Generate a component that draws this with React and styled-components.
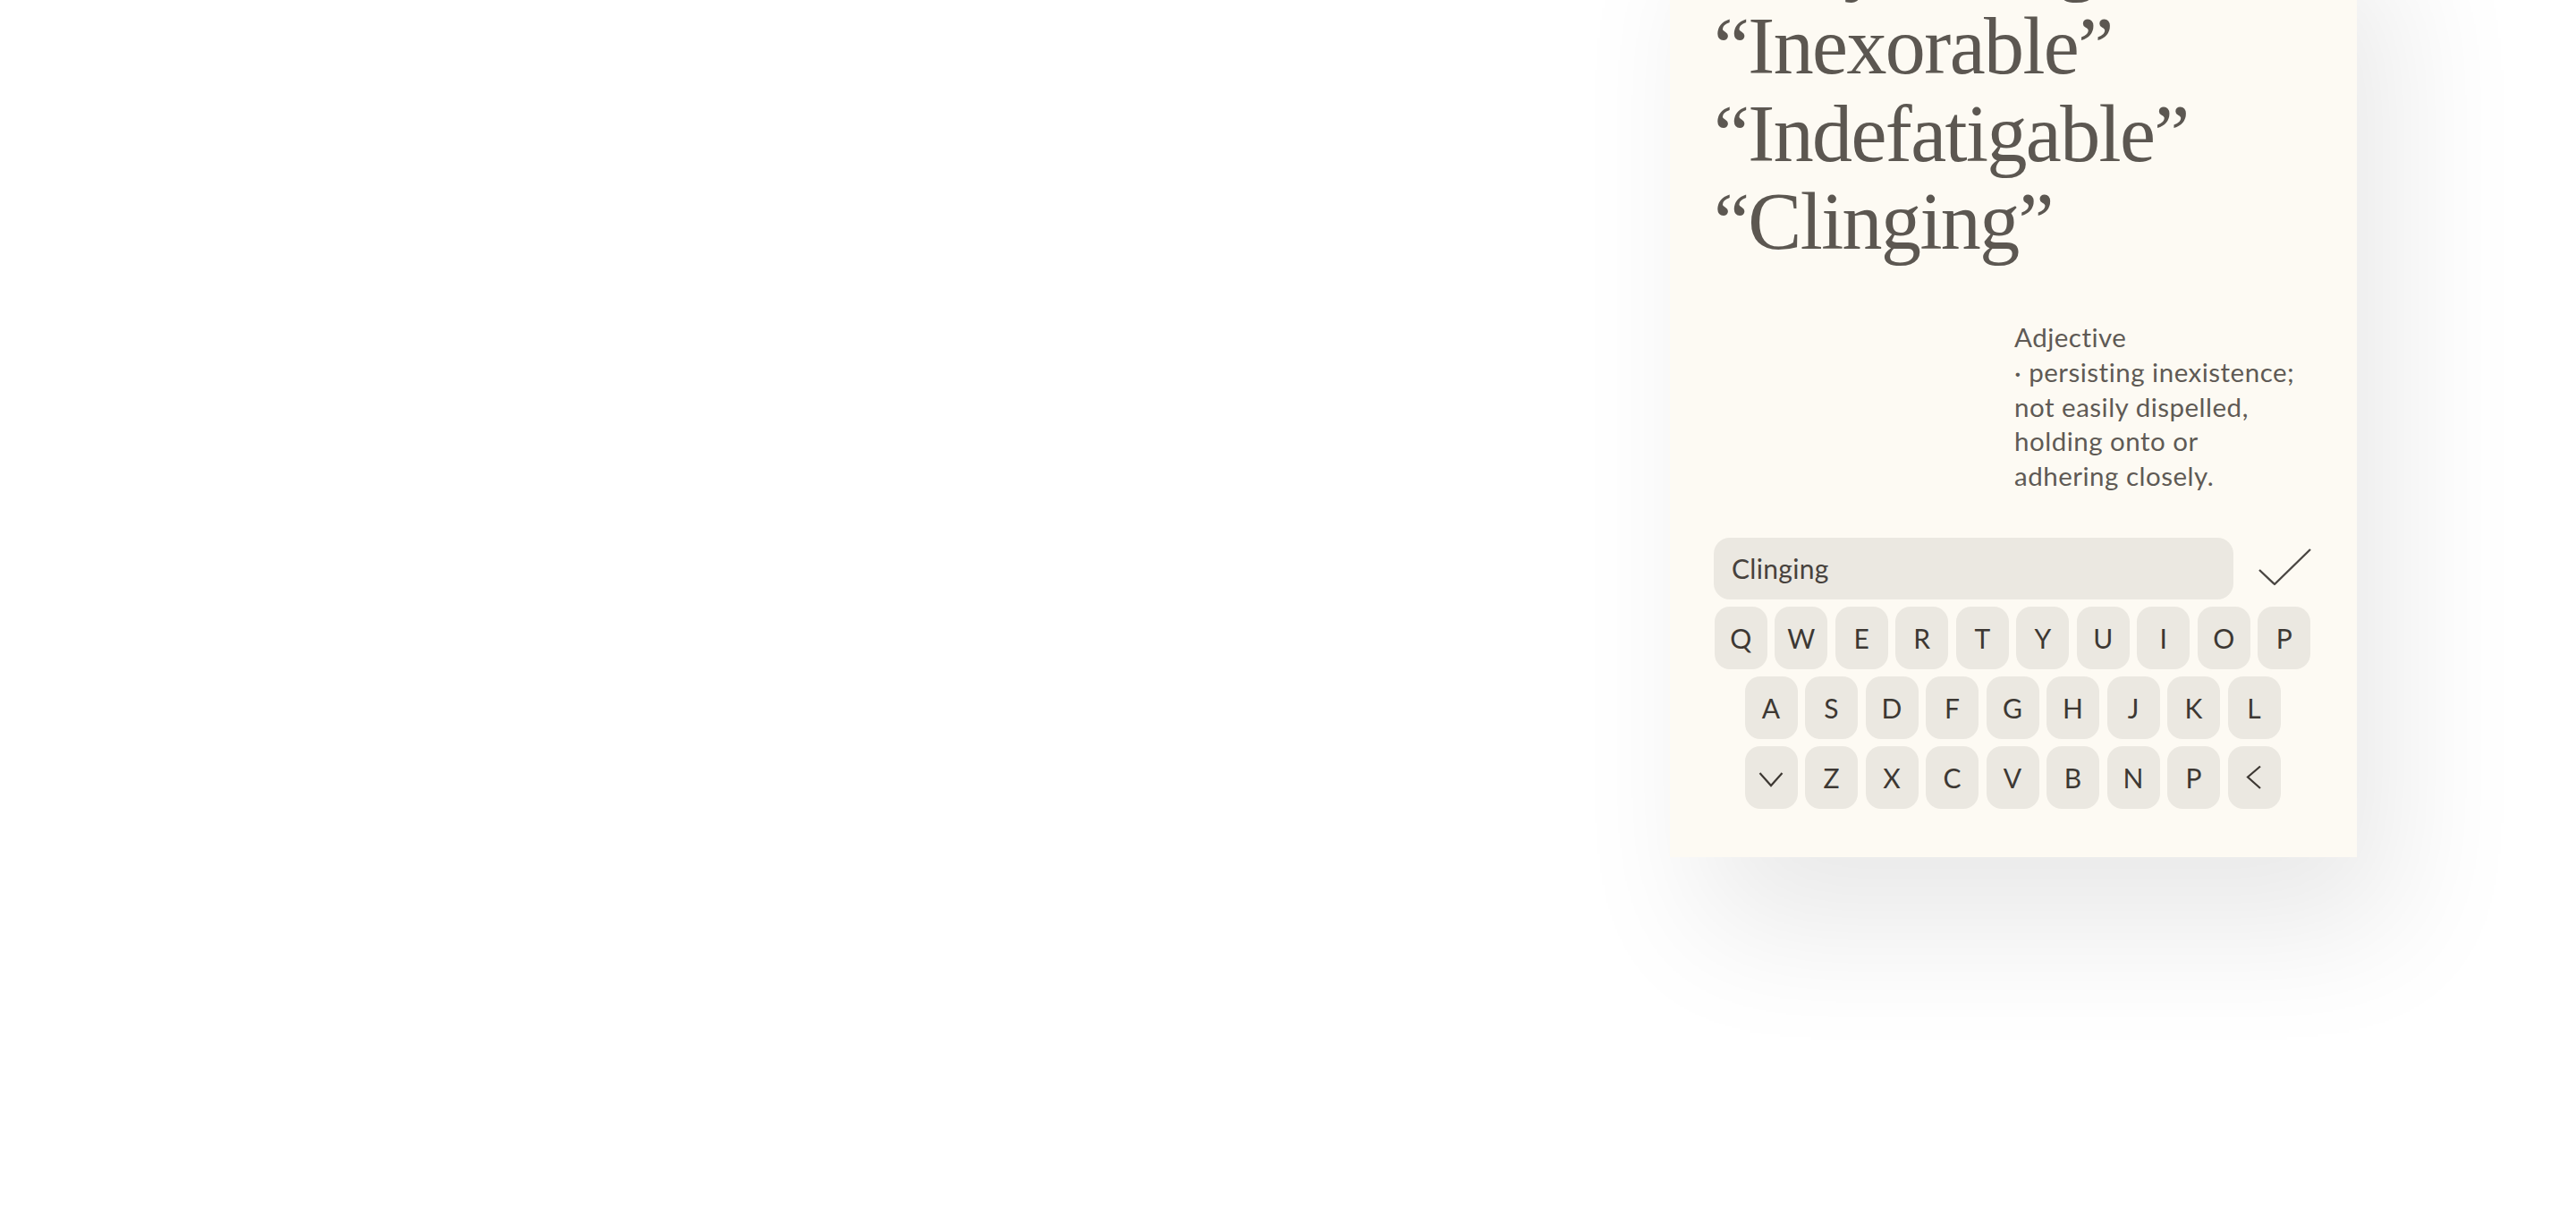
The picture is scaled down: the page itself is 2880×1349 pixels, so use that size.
import styled, { createGlobalStyle } from "styled-components";

const GlobalStyle = createGlobalStyle`
  html, body {
    margin: 0;
    padding: 0;
    background: #ffffff;
    overflow: hidden;
  }
`;

const Page = styled.div`
  display: grid;
  grid-template-columns: 1fr 768px 245px;
  align-items: start;
  height: 1349px;
  overflow: hidden;
`;

const Card = styled.section`
  grid-column: 2;
  margin-top: -120px;
  padding: 25px 51px 54px 49px;
  background: #fdfaf3;
  box-shadow: 40px 80px 140px rgba(0, 0, 0, 0.09);
  display: flex;
  flex-direction: column;
`;

const WordList = styled.ul`
  list-style: none;
  margin: 0;
  padding: 0;
  font-family: "Liberation Serif", "Times New Roman", serif;
  font-size: 90px;
  line-height: 98px;
  letter-spacing: -1.6px;
  color: #5c5751;
  white-space: nowrap;
`;

const Definition = styled.p`
  margin: 61px 0 0 336px;
  font-family: Lato, "Noto Sans", sans-serif;
  font-size: 29.5px;
  line-height: 38.8px;
  letter-spacing: 0.5px;
  color: #5f5a55;
  white-space: nowrap;
`;

const InputRow = styled.div`
  display: flex;
  align-items: center;
  gap: 27px;
  margin-top: 49px;
`;

const WordInput = styled.div`
  flex: 1;
  height: 69px;
  display: flex;
  align-items: center;
  padding-left: 20px;
  border-radius: 18px;
  background: #ebe8e1;
  font-family: Lato, "Noto Sans", sans-serif;
  font-size: 30px;
  letter-spacing: 0.3px;
  color: #47423d;
`;

const Keyboard = styled.div`
  display: flex;
  flex-direction: column;
  gap: 8px;
  margin-top: 8px;
`;

const KeyRow = styled.div`
  display: flex;
  justify-content: center;
  gap: 8.5px;
`;

const Key = styled.div`
  width: 59px;
  height: 70px;
  display: flex;
  align-items: center;
  justify-content: center;
  border-radius: 17px;
  background: #ebe8e1;
  font-family: Lato, "Noto Sans", sans-serif;
  font-size: 30px;
  color: #3d3833;
  padding-top: ${(p) => (p.$icon ? "4px" : "0")};
  box-sizing: border-box;
`;

const rows = [
  ["Q", "W", "E", "R", "T", "Y", "U", "I", "O", "P"],
  ["A", "S", "D", "F", "G", "H", "J", "K", "L"],
  ["shift", "Z", "X", "C", "V", "B", "N", "P", "back"],
];

function Check() {
  return (
    <svg width="60" height="69" viewBox="0 0 60 69" fill="none">
      <path d="M2 36 L19 52 L59 13" stroke="#4a4642" strokeWidth="2.4" strokeLinejoin="round" />
    </svg>
  );
}

function KeyGlyph({ k }) {
  if (k === "shift") {
    return (
      <svg width="28" height="18" viewBox="0 0 28 18" fill="none">
        <path d="M1.5 2 L14 16 L26.5 2" stroke="#3d3833" strokeWidth="2.2" />
      </svg>
    );
  }
  if (k === "back") {
    return (
      <svg width="18" height="28" viewBox="0 0 18 28" fill="none">
        <path d="M16 1.5 L2 13.5 L16 26" stroke="#3d3833" strokeWidth="2.2" />
      </svg>
    );
  }
  return k;
}

export default function App() {
  return (
    <>
      <GlobalStyle />
      <Page>
        <Card>
          <WordList>
            <li>“Unyielding”</li>
            <li>“Inexorable”</li>
            <li>“Indefatigable”</li>
            <li>“Clinging”</li>
          </WordList>
          <Definition>
            Adjective
            <br />
            · persisting inexistence;
            <br />
            not easily dispelled,
            <br />
            holding onto or
            <br />
            adhering closely.
          </Definition>
          <InputRow>
            <WordInput>Clinging</WordInput>
            <Check />
          </InputRow>
          <Keyboard>
            {rows.map((row, i) => (
              <KeyRow key={i}>
                {row.map((k, j) => (
                  <Key key={j} $icon={k === "shift"}>
                    <KeyGlyph k={k} />
                  </Key>
                ))}
              </KeyRow>
            ))}
          </Keyboard>
        </Card>
      </Page>
    </>
  );
}
